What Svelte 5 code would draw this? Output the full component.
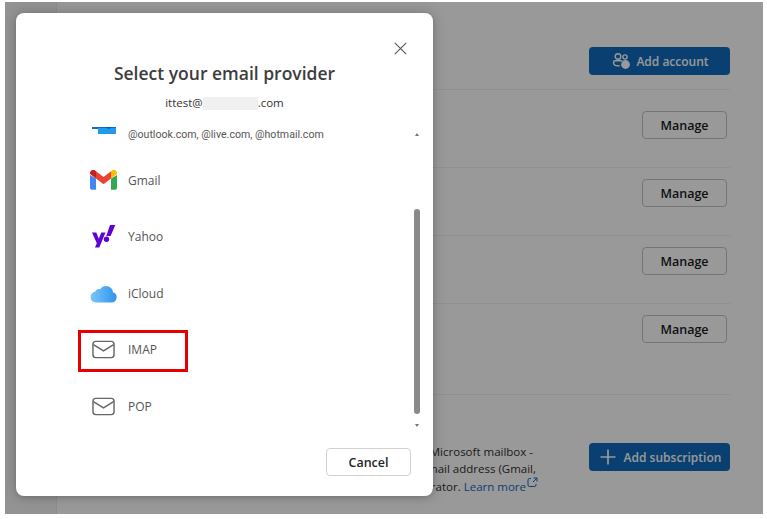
<script>
  const rows = [1, 2, 3, 4];
  const providers = [
    { id: 'gmail', label: 'Gmail' },
    { id: 'yahoo', label: 'Yahoo' },
    { id: 'icloud', label: 'iCloud' },
    { id: 'mail', label: 'IMAP' },
    { id: 'mail', label: 'POP' }
  ];
</script>

<div class="shot">
  <div class="window">
    <div class="sidebar"></div>
    <main class="page">
      <div class="head">
        <button class="primary">
          <svg width="20" height="20" viewBox="0 0 20 20" fill="none" stroke="currentColor" stroke-width="1.4">
            <circle cx="8" cy="5.500" r="2.800" />
            <circle cx="15" cy="6" r="2.100" />
            <path d="M3.500 11.500c0-1 .8-1.700 1.700-1.700h5.600c.6 0 1.200.3 1.400.8M3.500 11.500c0 2 2 3.300 4.500 3.300.6 0 1.200-.1 1.700-.2" />
            <circle cx="15.500" cy="13.500" r="4.400" fill="currentColor" stroke="none" />
          </svg>
          Add account
        </button>
      </div>
      {#each rows as r}
        <div class="row row{r}">
          <button class="manage">Manage</button>
        </div>
      {/each}
      <div class="sub">
        <p class="desc">
          <span class="l1">Microsoft mailbox -</span>
          <span class="l2">mail address (Gmail,</span>
          <span>rator. <a href="#more">Learn more</a><svg class="ext" width="11" height="11" viewBox="0 0 11 11" fill="none" stroke="currentColor" stroke-width="1"><path d="M4 1.500H2.500a1.500 1.500 0 0 0-1.500 1.500v5a1.500 1.500 0 0 0 1.500 1.500h5A1.500 1.500 0 0 0 9 8V7M6.500 1H10v3.500M10 1 6 5" /></svg></span>
        </p>
        <button class="primary">
          <svg width="20" height="20" viewBox="0 0 20 20" fill="none" stroke="currentColor" stroke-width="1.700"><path d="M10 2.500v15M2.500 10h15" /></svg>
          Add subscription
        </button>
      </div>
    </main>
    <div class="scrim"></div>

    <section class="modal">
      <button class="close" aria-label="Close">
        <svg width="13" height="13" viewBox="0 0 13 13" fill="none" stroke="#555" stroke-width="1.100"><path d="M.8.8l11.400 11.400M12.200.8.8 12.200" /></svg>
      </button>
      <h1>Select your email provider</h1>
      <div class="email">ittest@<span class="blank"></span>.com</div>

      <div class="list">
        <div class="item first">
          <span class="icon">
            <svg width="26" height="7" viewBox="0 0 26 7">
              <rect x="1" y="0" width="24" height="2" fill="#0f6cc6" />
              <rect x="7" y="1" width="18" height="6" fill="#1e9bec" />
              <path d="M14 0l4 2 3-2z" fill="#0a5aa8" />
            </svg>
          </span>
          <span>@outlook.com, @live.com, @hotmail.com</span>
        </div>
        {#each providers as p}
          <div class="item">
            <span class="icon">
              {#if p.id === 'gmail'}
                <svg width="27" height="20" viewBox="0 0 27 20">
                  <path d="M0 5v13a1.800 1.800 0 0 0 1.800 1.800H6V8.500z" fill="#4285f4" />
                  <path d="M27 5v13a1.800 1.800 0 0 1-1.800 1.800H21V8.500z" fill="#34a853" />
                  <path d="M21 1.200 13.500 7 6 1.200v7.300l7.500 5.800L21 8.500z" fill="#ea4335" />
                  <path d="M21 1.200v7.300l6-4.500V3c0-2.600-3-4-5-2.600z" fill="#fbbc04" />
                  <path d="M6 1.200v7.300L0 4V3c0-2.600 3-4 5-2.600z" fill="#c5221f" />
                </svg>
              {:else if p.id === 'yahoo'}
                <svg width="24" height="23" viewBox="0 0 24 23" fill="#5f01d1">
                  <path d="M0 7.500h4.300l2.500 6.200 2.500-6.200h4.200L7.300 22.500H3l1.800-4.200z" />
                  <circle cx="14.500" cy="14.300" r="2.700" />
                  <path d="M18 0h5.300l-4.700 11H14.300z" />
                </svg>
              {:else if p.id === 'icloud'}
                <svg width="27" height="19" viewBox="0 0 27 19">
                  <defs>
                    <linearGradient id="cloud" x1="0" y1="0" x2="1" y2="0">
                      <stop offset="0" stop-color="#7cc6f8" />
                      <stop offset="1" stop-color="#2f93ee" />
                    </linearGradient>
                  </defs>
                  <path d="M6 18.500a5.400 5.400 0 0 1-1-10.700 4.300 4.300 0 0 1 5.200-2.500A7 7 0 0 1 23 8.200a5.300 5.300 0 0 1-1.500 10.300z" fill="url(#cloud)" />
                </svg>
              {:else}
                <svg width="23" height="19" viewBox="0 0 24 19" fill="none" stroke="#666" stroke-width="1.500">
                  <rect x="1" y="1" width="22" height="17" rx="3" />
                  <path d="M1.500 4.500 12 11l10.500-6.500" />
                </svg>
              {/if}
            </span>
            <span>{p.label}</span>
          </div>
        {/each}
        <div class="bar">
          <span class="arrow up"></span>
          <span class="thumb"></span>
          <span class="arrow down"></span>
        </div>
      </div>

      <footer>
        <button class="cancel">Cancel</button>
      </footer>
    </section>

    <div class="mark"></div>
  </div>
</div>

<style>
  :global(body) {
    margin: 0;
    background: #fff;
  }
  .shot {
    width: 767px;
    height: 519px;
    box-sizing: border-box;
    padding: 2px 4px 5px 5px;
    display: flex;
    font-family: "Open Sans", "Noto Sans", sans-serif;
    overflow: hidden;
  }
  .window {
    position: relative;
    flex: 1;
    display: flex;
    background: #fff;
    overflow: hidden;
  }
  .sidebar {
    width: 51px;
    flex: none;
    background: #f6f6f6;
    border-right: 1px solid #ececec;
  }
  .page {
    flex: 1;
    padding-right: 33px;
    display: flex;
    flex-direction: column;
  }
  .head {
    height: 88px;
    box-sizing: border-box;
    padding-top: 45px;
    display: flex;
    justify-content: flex-end;
    border-bottom: 1px solid #f1f1f1;
  }
  button {
    font-family: inherit;
    box-sizing: border-box;
    cursor: pointer;
  }
  .primary {
    width: 141px;
    height: 28px;
    padding: 0;
    border: 0;
    border-radius: 4px;
    background: #0f6cbd;
    color: #fff;
    font-size: 12px;
    font-weight: 600;
    display: flex;
    align-items: center;
    justify-content: center;
    gap: 6px;
  }
  .row {
    display: flex;
    justify-content: flex-end;
    padding-right: 3px;
    padding-top: 11px;
    height: 68px;
    box-sizing: border-box;
    border-bottom: 1px solid #f1f1f1;
  }
  .row1 {
    height: 78px;
    padding-top: 21px;
  }
  .row4 {
    height: 91px;
  }
  .manage {
    width: 85px;
    height: 28px;
    background: #fff;
    border: 1px solid #c4c4c4;
    border-radius: 4px;
    color: #1a1a1a;
    font-size: 12.500px;
    font-weight: 600;
  }
  .sub {
    display: flex;
    justify-content: flex-end;
    align-items: flex-start;
    padding-top: 48px;
    gap: 51px;
  }
  .desc {
    margin: 1px 0 0;
    color: #303030;
    font-size: 11.500px;
    line-height: 16.500px;
    text-align: right;
    white-space: nowrap;
  }
  .desc span {
    display: block;
  }
  .desc .l1 {
    margin-right: 5px;
  }
  .desc .l2 {
    margin-right: 2px;
  }
  .desc a {
    color: #0f6cbd;
    text-decoration: none;
  }
  .ext {
    color: #0f6cbd;
    vertical-align: 3px;
    margin-left: 1px;
  }
  .scrim {
    position: absolute;
    inset: 0;
    background: rgba(0, 0, 0, 0.4);
  }
  .modal {
    position: absolute;
    left: 11px;
    top: 11px;
    width: 417px;
    height: 483px;
    box-sizing: border-box;
    background: #fff;
    border-radius: 8px;
    box-shadow: 0 0 14px rgba(0, 0, 0, 0.22), 0 2px 4px rgba(0, 0, 0, 0.1);
    display: flex;
    flex-direction: column;
    align-items: stretch;
  }
  .close {
    position: absolute;
    right: 26px;
    top: 29px;
    width: 13px;
    height: 13px;
    padding: 0;
    border: 0;
    background: none;
    display: flex;
  }
  h1 {
    margin: 47px 0 0;
    height: 27px;
    line-height: 27px;
    text-align: center;
    font-size: 17.500px;
    font-weight: 600;
    color: #3d3d3d;
  }
  .email {
    margin-top: 8px;
    height: 16px;
    line-height: 16px;
    text-align: center;
    font-size: 11.500px;
    color: #333;
  }
  .blank {
    display: inline-block;
    width: 55px;
    height: 13px;
    background: #f0f0f0;
    vertical-align: -3px;
  }
  .list {
    position: relative;
    margin-top: 15px;
    height: 309px;
    overflow: hidden;
    padding-left: 74px;
  }
  .item {
    height: 56.500px;
    display: flex;
    align-items: center;
    gap: 11px;
    font-size: 12px;
    color: #555;
  }
  .item.first {
    height: 26px;
    font-family: Roboto, "Open Sans", sans-serif;
    font-size: 10.600px;
    align-items: flex-start;
    padding-top: 2px;
    box-sizing: border-box;
  }
  .item.first .icon {
    align-items: flex-start;
    height: 7px;
    margin-top: -1px;
  }
  .icon {
    width: 27px;
    flex: none;
    display: flex;
    justify-content: center;
    align-items: center;
  }
  .bar {
    position: absolute;
    right: 13px;
    top: 0;
    bottom: 0;
    width: 6px;
  }
  .arrow {
    position: absolute;
    left: 1px;
    width: 0;
    height: 0;
    border-left: 2px solid transparent;
    border-right: 2px solid transparent;
  }
  .up {
    top: 7px;
    border-bottom: 3px solid #777;
  }
  .down {
    top: 298px;
    border-top: 3px solid #777;
  }
  .thumb {
    position: absolute;
    left: 0;
    top: 83px;
    width: 6px;
    height: 205px;
    border-radius: 3px;
    background: #8a8a8a;
  }
  footer {
    margin-top: auto;
    padding: 0 22px 20px;
    display: flex;
    justify-content: flex-end;
  }
  .cancel {
    width: 85px;
    height: 28px;
    background: #fff;
    border: 1px solid #d1d1d1;
    border-radius: 4px;
    color: #242424;
    font-size: 12.500px;
    font-weight: 600;
  }
  .mark {
    position: absolute;
    left: 73px;
    top: 328px;
    width: 110px;
    height: 42px;
    box-sizing: border-box;
    border: 3px solid #e60000;
  }
</style>
